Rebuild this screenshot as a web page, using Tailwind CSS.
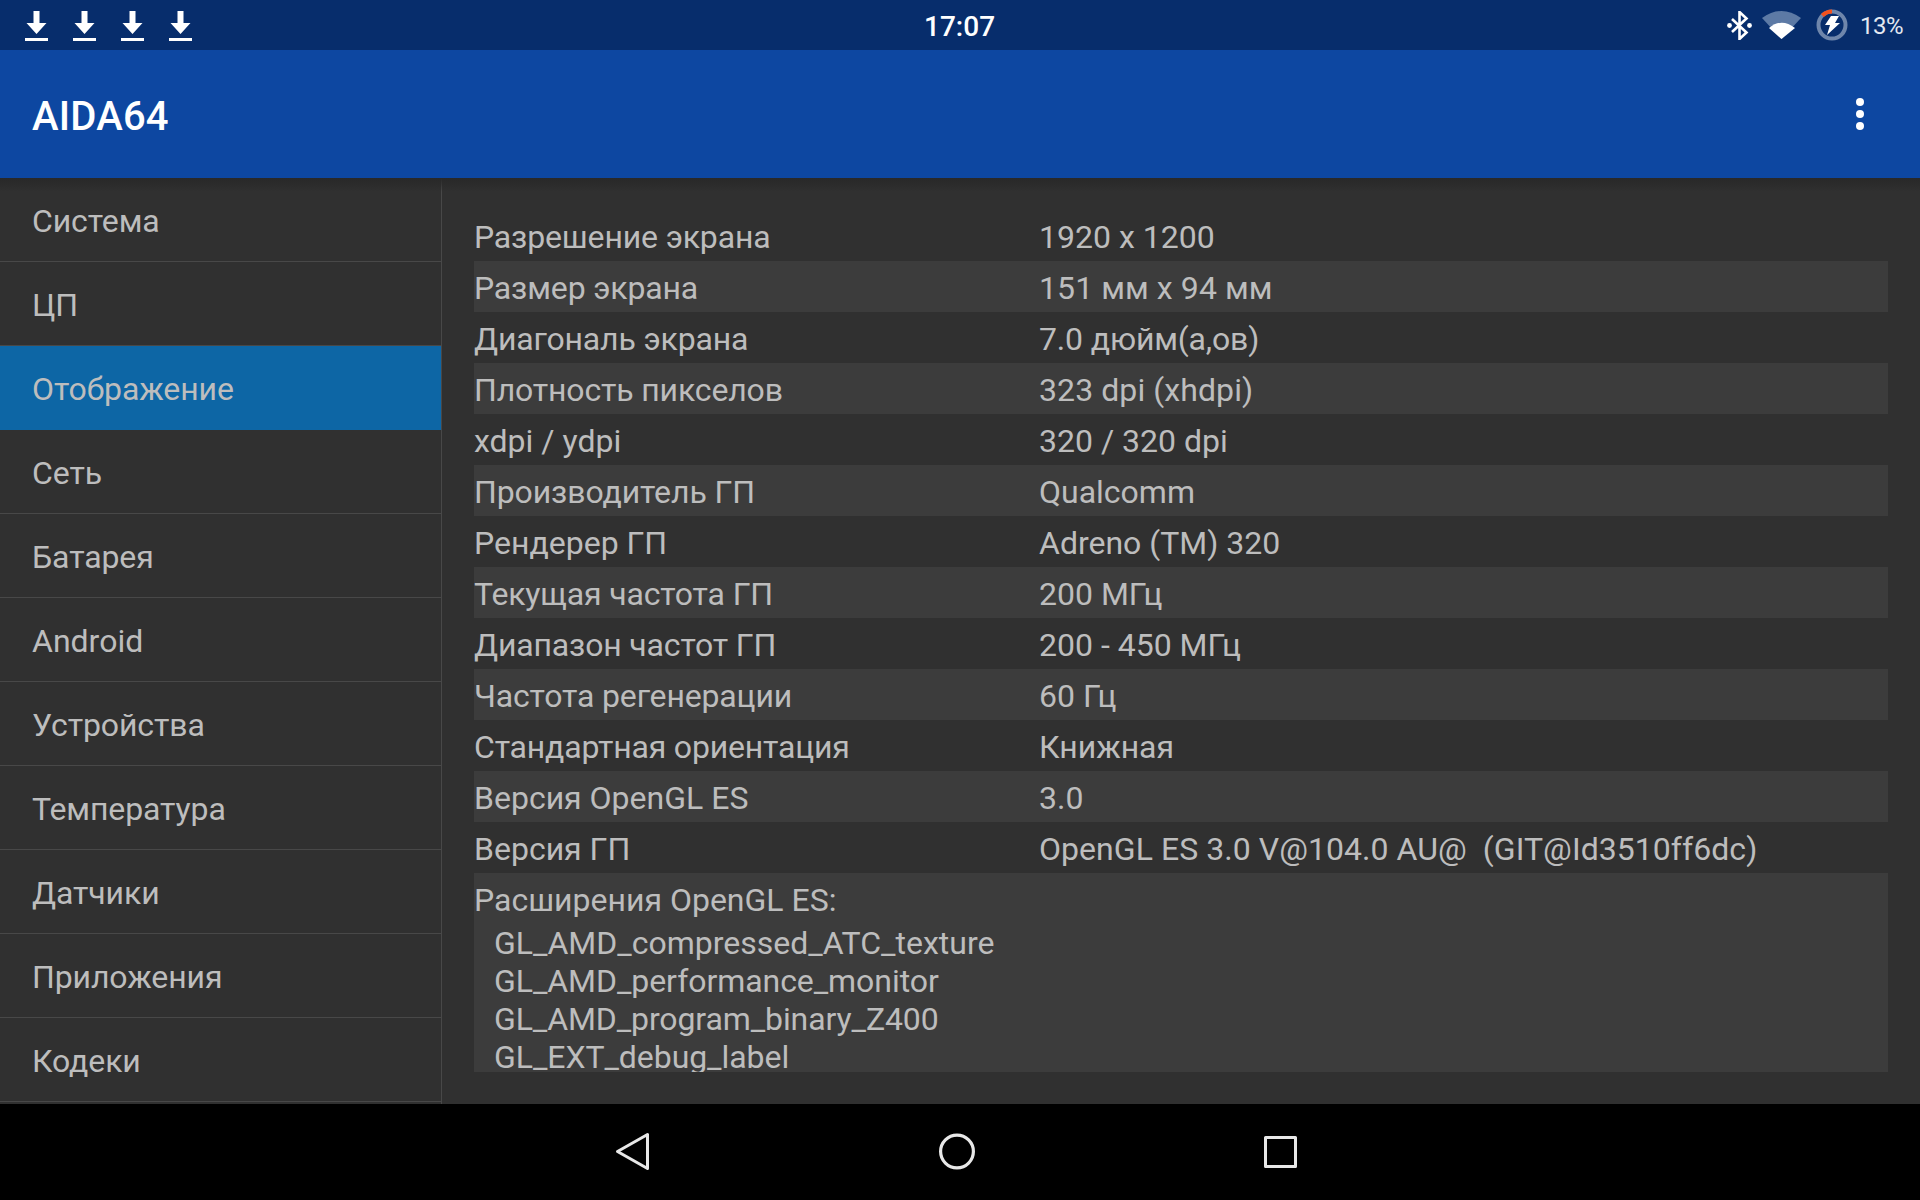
<!DOCTYPE html>
<html lang="ru">
  <head>
    <meta charset="UTF-8" />
    <title>AIDA64</title>
    <script src="https://cdn.jsdelivr.net/npm/@tailwindcss/browser@4"></script>
  </head>
  <body class="w-[1920px] h-[1200px] overflow-hidden flex flex-col bg-[#303030] font-['Roboto',sans-serif]">
    <!-- status bar -->
    <div class="h-[50px] shrink-0 bg-[#072d6c] flex items-center justify-between pl-[25px] pr-[17px] relative">
      <div class="flex gap-[25px]">
        <svg class="w-[23px] h-[30px] mt-[1px]" viewBox="0 0 23 30" fill="#fff"><path d="M8.5 0h6v12h7l-10 11-10-11h7z"/><rect x="0" y="27" width="23" height="3"/></svg>
        <svg class="w-[23px] h-[30px] mt-[1px]" viewBox="0 0 23 30" fill="#fff"><path d="M8.5 0h6v12h7l-10 11-10-11h7z"/><rect x="0" y="27" width="23" height="3"/></svg>
        <svg class="w-[23px] h-[30px] mt-[1px]" viewBox="0 0 23 30" fill="#fff"><path d="M8.5 0h6v12h7l-10 11-10-11h7z"/><rect x="0" y="27" width="23" height="3"/></svg>
        <svg class="w-[23px] h-[30px] mt-[1px]" viewBox="0 0 23 30" fill="#fff"><path d="M8.5 0h6v12h7l-10 11-10-11h7z"/><rect x="0" y="27" width="23" height="3"/></svg>
      </div>
      <span class="absolute left-[924px] top-[10px] text-[28px] leading-[33px] font-medium text-white">17:07</span>
      <div class="flex items-center">
        <svg class="w-[25px] h-[29px] mr-[10px]" viewBox="0 0 25 29" fill="none" stroke="#fff" stroke-width="2.6"><path d="M5 8l14.5 13.5-7 6.5V1l7 6.5L5 21"/><circle cx="2.5" cy="14.5" r="2.4" fill="#fff" stroke="none"/><circle cx="22.5" cy="14.5" r="2.4" fill="#fff" stroke="none"/></svg>
        <svg class="w-[39px] h-[28px] mr-[15px]" viewBox="0 0 39 28"><path d="M0 7Q19.5 -7 39 7L19.5 28z" fill="#5d7aa5"/><path d="M7 17Q19.5 6.4 33 17L19.5 28z" fill="#fff"/></svg>
        <svg class="w-[32px] h-[32px] mr-[12px]" viewBox="0 0 32 32" fill="none"><circle cx="16" cy="16" r="13.5" stroke="#6f86ab" stroke-width="4"/><path d="M6.4 6.5A13.5 13.5 0 0 1 16 2.5" stroke="#f4511e" stroke-width="4"/><path d="M15 7h8l-4 7h5L11 26l3-10H9z" fill="#fff"/></svg>
        <span class="text-[24px] leading-[30px] mt-[2px] text-[#e4e9f1] tracking-[-0.5px]">13%</span>
      </div>
    </div>

    <!-- app bar -->
    <div class="h-[128px] shrink-0 bg-[#0d47a1] flex items-center justify-between pl-[32px] pr-[56px]">
      <span class="text-[40px] leading-[48px] mt-[6px] font-medium text-white tracking-[0.2px]">AIDA64</span>
      <div class="flex flex-col gap-[4px]">
        <div class="w-[8px] h-[8px] rounded-full bg-white"></div>
        <div class="w-[8px] h-[8px] rounded-full bg-white"></div>
        <div class="w-[8px] h-[8px] rounded-full bg-white"></div>
      </div>
    </div>

    <!-- main -->
    <div class="flex-1 flex relative min-h-0">
      <div class="absolute inset-x-0 top-0 h-[14px] bg-gradient-to-b from-[#282828] to-transparent pointer-events-none"></div>
      <div class="w-[442px] shrink-0 border-r border-[#484848] text-[32px] text-[#bdbdbd] tracking-[-0.1px]">
        <div class="h-[84px] pl-[32px] pt-[2px] flex items-center border-b border-[#484848]">Система</div>
        <div class="h-[84px] pl-[32px] pt-[2px] flex items-center border-b border-[#484848]">ЦП</div>
        <div class="h-[84px] pl-[32px] pt-[2px] flex items-center bg-[#0d66a5]">Отображение</div>
        <div class="h-[84px] pl-[32px] pt-[2px] flex items-center border-b border-[#484848]">Сеть</div>
        <div class="h-[84px] pl-[32px] pt-[2px] flex items-center border-b border-[#484848]">Батарея</div>
        <div class="h-[84px] pl-[32px] pt-[2px] flex items-center border-b border-[#484848] tracking-normal">Android</div>
        <div class="h-[84px] pl-[32px] pt-[2px] flex items-center border-b border-[#484848]">Устройства</div>
        <div class="h-[84px] pl-[32px] pt-[2px] flex items-center border-b border-[#484848]">Температура</div>
        <div class="h-[84px] pl-[32px] pt-[2px] flex items-center border-b border-[#484848]">Датчики</div>
        <div class="h-[84px] pl-[32px] pt-[2px] flex items-center border-b border-[#484848]">Приложения</div>
        <div class="h-[84px] pl-[32px] pt-[2px] flex items-center border-b border-[#484848]">Кодеки</div>
      </div>
      <div class="flex-1 pt-[32px] pl-[32px] pr-[32px] text-[32px] text-[#bdbdbd]">
        <div class="h-[51px] pt-[2px] flex items-center"><span class="w-[565px] tracking-[-0.15px]">Разрешение экрана</span><span>1920 x 1200</span></div>
        <div class="h-[51px] pt-[2px] flex items-center bg-[#3c3c3c]"><span class="w-[565px] tracking-[-0.15px]">Размер экрана</span><span class="tracking-[0.08px]">151 мм x 94 мм</span></div>
        <div class="h-[51px] pt-[2px] flex items-center"><span class="w-[565px] tracking-[-0.15px]">Диагональ экрана</span><span class="tracking-[-0.15px]">7.0 дюйм(а,ов)</span></div>
        <div class="h-[51px] pt-[2px] flex items-center bg-[#3c3c3c]"><span class="w-[565px] tracking-[-0.15px]">Плотность пикселов</span><span class="tracking-[0.08px]">323 dpi (xhdpi)</span></div>
        <div class="h-[51px] pt-[2px] flex items-center"><span class="w-[565px]">xdpi / ydpi</span><span>320 / 320 dpi</span></div>
        <div class="h-[51px] pt-[2px] flex items-center bg-[#3c3c3c]"><span class="w-[565px] tracking-[-0.1px]">Производитель ГП</span><span>Qualcomm</span></div>
        <div class="h-[51px] pt-[2px] flex items-center"><span class="w-[565px]">Рендерер ГП</span><span>Adreno (TM) 320</span></div>
        <div class="h-[51px] pt-[2px] flex items-center bg-[#3c3c3c]"><span class="w-[565px] tracking-[-0.15px]">Текущая частота ГП</span><span>200 МГц</span></div>
        <div class="h-[51px] pt-[2px] flex items-center"><span class="w-[565px] tracking-[-0.15px]">Диапазон частот ГП</span><span>200 - 450 МГц</span></div>
        <div class="h-[51px] pt-[2px] flex items-center bg-[#3c3c3c]"><span class="w-[565px] tracking-[-0.15px]">Частота регенерации</span><span>60 Гц</span></div>
        <div class="h-[51px] pt-[2px] flex items-center"><span class="w-[565px] tracking-[-0.18px]">Стандартная ориентация</span><span>Книжная</span></div>
        <div class="h-[51px] pt-[2px] flex items-center bg-[#3c3c3c]"><span class="w-[565px]">Версия OpenGL ES</span><span>3.0</span></div>
        <div class="h-[51px] pt-[2px] flex items-center"><span class="w-[565px]">Версия ГП</span><span class="whitespace-pre tracking-[0.05px]">OpenGL ES 3.0 V@104.0 AU@  (GIT@Id3510ff6dc)</span></div>
        <div class="h-[199px] overflow-hidden bg-[#3c3c3c] pt-[8px]">
          <div class="leading-[38px] mb-[5px]">Расширения OpenGL ES:</div>
          <div class="pl-[20px] leading-[38px]">
            <div>GL_AMD_compressed_ATC_texture</div>
            <div class="tracking-[-0.06px]">GL_AMD_performance_monitor</div>
            <div class="tracking-[-0.1px]">GL_AMD_program_binary_Z400</div>
            <div class="tracking-[-0.06px]">GL_EXT_debug_label</div>
          </div>
        </div>
      </div>
    </div>

    <!-- nav bar -->
    <div class="h-[96px] shrink-0 bg-black relative">
      <svg class="absolute left-[611px] top-[28px] w-[40px] h-[40px]" viewBox="0 0 40 40" fill="none" stroke="#e8e8e8" stroke-width="3" stroke-linejoin="round"><path d="M6.5 19.5L36.5 2.5v34z"/></svg>
      <svg class="absolute left-[936px] top-[28px] w-[40px] h-[40px]" viewBox="0 0 40 40" fill="none" stroke="#e8e8e8" stroke-width="3.2"><circle cx="21" cy="19.5" r="16.4"/></svg>
      <svg class="absolute left-[1261px] top-[28px] w-[40px] h-[40px]" viewBox="0 0 40 40" fill="none" stroke="#e8e8e8" stroke-width="3" stroke-linejoin="round"><rect x="4.5" y="5.5" width="30" height="29"/></svg>
    </div>
  </body>
</html>
